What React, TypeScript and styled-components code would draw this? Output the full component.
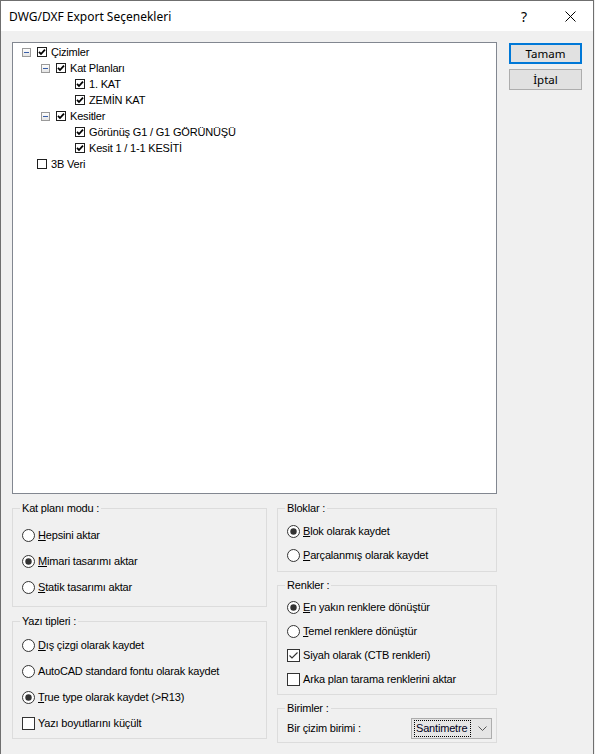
import React from "react";
import styled, { createGlobalStyle } from "styled-components";

const GlobalStyle = createGlobalStyle`
  html, body {
    margin: 0;
    padding: 0;
    background: #f0f0f0;
  }
  body {
    font-family: "Liberation Sans", Arial, sans-serif;
    font-size: 11px;
    letter-spacing: -0.18px;
    color: #000;
  }
`;

const Window = styled.div`
  width: 594px;
  height: 754px;
  box-sizing: border-box;
  border: 1px solid #6f6f6f;
  border-bottom: none;
  background: #f0f0f0;
  display: flex;
  flex-direction: column;
`;

const TitleBar = styled.div`
  height: 30px;
  background: #fff;
  display: flex;
  align-items: center;
  padding-left: 8px;
`;

const Title = styled.div`
  flex: 1;
  font-family: "Noto Sans", "Open Sans", sans-serif;
  font-size: 12px;
  letter-spacing: 0;
`;

const CaptionButton = styled.div`
  width: 46px;
  height: 30px;
  display: flex;
  align-items: center;
  justify-content: center;
  font-family: "Noto Sans", sans-serif;
  font-size: 14px;
`;

const Body = styled.div`
  flex: 1;
  padding: 11px 11px 0 11px;
  display: flex;
  flex-direction: column;
  gap: 8px;
`;

const TopRow = styled.div`
  display: flex;
  gap: 12px;
`;

const TreePanel = styled.div`
  width: 485px;
  height: 452px;
  box-sizing: border-box;
  border: 1px solid #828790;
  background: #fff;
  padding-top: 1px;
`;

const TreeRow = styled.div<{ $level: number }>`
  height: 16px;
  display: flex;
  align-items: center;
  padding-left: ${(p) => 9 + p.$level * 19}px;
`;

const ExpanderSlot = styled.div`
  width: 15px;
  height: 16px;
  display: flex;
  align-items: center;
`;

const TreeCheck = styled.div`
  width: 10px;
  height: 10px;
  margin-right: 4px;
  display: flex;
`;

const TreeLabel = styled.span`
  line-height: 16px;
  white-space: nowrap;
`;

const ButtonColumn = styled.div`
  display: flex;
  flex-direction: column;
  gap: 5px;
  padding-top: 1px;
`;

const PushButton = styled.div<{ $default?: boolean }>`
  width: 73px;
  height: 21px;
  box-sizing: border-box;
  background: #e1e1e1;
  border: ${(p) => (p.$default ? "2px solid #0078d7" : "1px solid #adadad")};
  display: flex;
  align-items: center;
  justify-content: center;
  font-family: "Noto Sans", sans-serif;
  font-size: 11.5px;
  letter-spacing: 0;
`;

const GroupsRow = styled.div`
  display: flex;
  gap: 10px;
`;

const Column = styled.div<{ $width: number; $gap: number }>`
  width: ${(p) => p.$width}px;
  display: flex;
  flex-direction: column;
  gap: ${(p) => p.$gap}px;
`;

const Group = styled.fieldset`
  margin: 0;
  padding: 0;
  border: 1px solid #dcdcdc;
  min-width: 0;
`;

const Legend = styled.legend`
  margin-left: 7px;
  padding: 0 2px;
  line-height: 13px;
`;

const GroupBody = styled.div<{ $top: number; $bottom: number }>`
  padding: ${(p) => p.$top}px 0 ${(p) => p.$bottom}px 9px;
`;

const OptionRow = styled.div<{ $height: number }>`
  height: ${(p) => p.$height}px;
  display: flex;
  align-items: center;
  gap: 3px;
  white-space: nowrap;
`;

const Key = styled.span`
  text-decoration: underline;
  text-underline-offset: 1px;
`;

const UnitsRow = styled.div`
  height: 24px;
  display: flex;
  align-items: center;
  justify-content: space-between;
  padding-right: 4px;
`;

const Combo = styled.div`
  width: 81px;
  height: 21px;
  box-sizing: border-box;
  border: 1px solid #adadad;
  background: #e5e5e5;
  display: flex;
  align-items: center;
  padding: 0 2px;
`;

const ComboText = styled.div`
  flex: 1;
  height: 17px;
  box-sizing: border-box;
  border: 1px dotted #000;
  padding-left: 1px;
  display: flex;
  align-items: center;
  margin-right: 4px;
  color: #000020;
`;

const ComboArrow = styled.div`
  width: 14px;
  display: flex;
  justify-content: center;
`;

const Expander = () => (
  <svg width="9" height="9" viewBox="0 0 9 9">
    <defs>
      <linearGradient id="exp" x1="0" y1="0" x2="0" y2="1">
        <stop offset="0" stopColor="#ffffff" />
        <stop offset="1" stopColor="#e3e3e3" />
      </linearGradient>
    </defs>
    <rect x="0.5" y="0.5" width="8" height="8" fill="url(#exp)" stroke="#9a9a9a" />
    <line x1="2" y1="4.5" x2="7" y2="4.5" stroke="#3a5fa8" />
  </svg>
);

const TreeCheckBox = ({ checked }: { checked: boolean }) => (
  <svg width="10" height="10" viewBox="0 0 10 10">
    <rect x="0.5" y="0.5" width="9" height="9" fill="#fff" stroke="#1f1f1f" />
    {checked && (
      <path d="M2 4.8 L4 7 L8 2.6" fill="none" stroke="#000" strokeWidth="1.8" />
    )}
  </svg>
);

const Radio = ({ selected }: { selected?: boolean }) => (
  <svg width="13" height="13" viewBox="0 0 13 13">
    <circle cx="6.5" cy="6.5" r="6" fill="#fff" stroke="#333" />
    {selected && <circle cx="6.5" cy="6.5" r="3.2" fill="#333" />}
  </svg>
);

const CheckBox = ({ checked }: { checked?: boolean }) => (
  <svg width="13" height="13" viewBox="0 0 13 13">
    <rect x="0.5" y="0.5" width="12" height="12" fill="#fff" stroke="#333" />
    {checked && <path d="M2.5 6.5 L5 9 L10.5 3.5" fill="none" stroke="#333" strokeWidth="1.1" />}
  </svg>
);

type TreeItem = {
  level: number;
  label: string;
  checked: boolean;
  expander?: boolean;
};

const treeItems: TreeItem[] = [
  { level: 0, label: "Çizimler", checked: true, expander: true },
  { level: 1, label: "Kat Planları", checked: true, expander: true },
  { level: 2, label: "1. KAT", checked: true },
  { level: 2, label: "ZEMİN KAT", checked: true },
  { level: 1, label: "Kesitler", checked: true, expander: true },
  { level: 2, label: "Görünüş G1 / G1 GÖRÜNÜŞÜ", checked: true },
  { level: 2, label: "Kesit 1 / 1-1 KESİTİ", checked: true },
  { level: 0, label: "3B Veri", checked: false },
];

const Option = ({
  kind,
  on,
  height,
  children,
}: {
  kind: "radio" | "check";
  on?: boolean;
  height: number;
  children: React.ReactNode;
}) => (
  <OptionRow $height={height}>
    {kind === "radio" ? <Radio selected={on} /> : <CheckBox checked={on} />}
    <span>{children}</span>
  </OptionRow>
);

export default function App() {
  return (
    <>
      <GlobalStyle />
      <Window>
        <TitleBar>
          <Title>DWG/DXF Export Seçenekleri</Title>
          <CaptionButton>?</CaptionButton>
          <CaptionButton>
            <svg width="11" height="11" viewBox="0 0 11 11">
              <path d="M0.5 0.5 L10.5 10.5 M10.5 0.5 L0.5 10.5" stroke="#000" strokeWidth="1" />
            </svg>
          </CaptionButton>
        </TitleBar>
        <Body>
          <TopRow>
            <TreePanel>
              {treeItems.map((item) => (
                <TreeRow key={item.label} $level={item.level}>
                  <ExpanderSlot>{item.expander && <Expander />}</ExpanderSlot>
                  <TreeCheck>
                    <TreeCheckBox checked={item.checked} />
                  </TreeCheck>
                  <TreeLabel>{item.label}</TreeLabel>
                </TreeRow>
              ))}
            </TreePanel>
            <ButtonColumn>
              <PushButton $default>Tamam</PushButton>
              <PushButton>İptal</PushButton>
            </ButtonColumn>
          </TopRow>

          <GroupsRow>
            <Column $width={255} $gap={8}>
              <Group>
                <Legend>Kat planı modu :</Legend>
                <GroupBody $top={7} $bottom={6}>
                  <Option kind="radio" height={26}>
                    <Key>H</Key>epsini aktar
                  </Option>
                  <Option kind="radio" on height={26}>
                    <Key>M</Key>imari tasarımı aktar
                  </Option>
                  <Option kind="radio" height={26}>
                    <Key>S</Key>tatik tasarımı aktar
                  </Option>
                </GroupBody>
              </Group>
              <Group>
                <Legend>Yazı tipleri :</Legend>
                <GroupBody $top={4} $bottom={2}>
                  <Option kind="radio" height={26}>
                    <Key>D</Key>ış çizgi olarak kaydet
                  </Option>
                  <Option kind="radio" height={26}>
                    AutoCAD standard fontu olarak kaydet
                  </Option>
                  <Option kind="radio" on height={26}>
                    <Key>T</Key>rue type olarak kaydet (&gt;R13)
                  </Option>
                  <Option kind="check" height={26}>
                    Yazı boyutlarını küçült
                  </Option>
                </GroupBody>
              </Group>
            </Column>

            <Column $width={220} $gap={7}>
              <Group>
                <Legend>Bloklar :</Legend>
                <GroupBody $top={4} $bottom={4}>
                  <Option kind="radio" on height={24}>
                    <Key>B</Key>lok olarak kaydet
                  </Option>
                  <Option kind="radio" height={24}>
                    <Key>P</Key>arçalanmış olarak kaydet
                  </Option>
                </GroupBody>
              </Group>
              <Group>
                <Legend>Renkler :</Legend>
                <GroupBody $top={3} $bottom={3}>
                  <Option kind="radio" on height={24}>
                    <Key>E</Key>n yakın renklere dönüştür
                  </Option>
                  <Option kind="radio" height={24}>
                    <Key>T</Key>emel renklere dönüştür
                  </Option>
                  <Option kind="check" on height={24}>
                    Siyah olarak (CTB renkleri)
                  </Option>
                  <Option kind="check" height={24}>
                    Arka plan tarama renklerini aktar
                  </Option>
                </GroupBody>
              </Group>
              <Group>
                <Legend>Birimler :</Legend>
                <GroupBody $top={1} $bottom={2}>
                  <UnitsRow>
                    <span>Bir çizim birimi :</span>
                    <Combo>
                      <ComboText>Santimetre</ComboText>
                      <ComboArrow>
                        <svg width="9" height="5" viewBox="0 0 9 5">
                          <path d="M0.5 0.5 L4.5 4.5 L8.5 0.5" fill="none" stroke="#555" />
                        </svg>
                      </ComboArrow>
                    </Combo>
                  </UnitsRow>
                </GroupBody>
              </Group>
            </Column>
          </GroupsRow>
        </Body>
      </Window>
    </>
  );
}
